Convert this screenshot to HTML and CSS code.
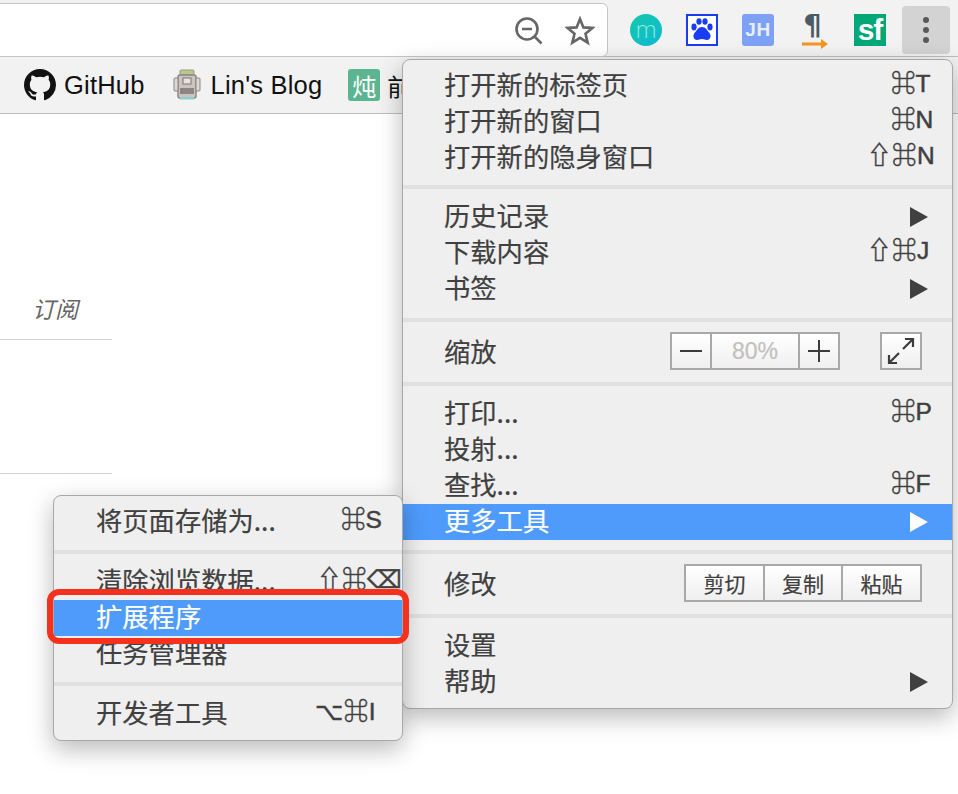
FILE: index.html
```html
<!DOCTYPE html>
<html lang="zh">
<head>
<meta charset="utf-8">
<title>Chrome menu</title>
<link rel="stylesheet" href="styles.css">
</head>
<body>
<div class="page">
  <header class="toolbar">
    <div class="omnibox">
      <svg class="omni-icon" width="30" height="30" viewBox="0 0 30 30" fill="none" stroke="#666" stroke-width="2.6"><circle cx="13" cy="13" r="10.5"/><path d="M8 13h10M20.500 20.500l7 7"/></svg>
      <svg class="omni-icon" width="30" height="30" viewBox="0 0 30 30" fill="none" stroke="#666" stroke-width="2.6" stroke-linejoin="miter"><path d="M15 3l3.400 8.400 9 .6-6.900 5.800 2.200 8.800L15 21.800l-7.700 4.800 2.200-8.800L2.600 12l9-.6z"/></svg>
    </div>
    <div class="extensions">
      <span class="ext ext-m">m</span>
      <svg class="ext" width="32" height="32" viewBox="0 0 32 32"><rect x="1" y="1" width="30" height="30" fill="#fff" stroke="#1a3cf5" stroke-width="2"/><g fill="#1a3cf5"><ellipse cx="8" cy="13" rx="2.600" ry="3.400"/><ellipse cx="13" cy="7.500" rx="2.600" ry="3.200"/><ellipse cx="19" cy="7.500" rx="2.600" ry="3.200"/><ellipse cx="24" cy="13" rx="2.600" ry="3.400"/><path d="M16 13c4 0 5 3.500 7.500 6 2 2.500 1 7-2.500 7-2 0-3-1-5-1s-3 1-5 1c-3.500 0-4.500-4.500-2.500-7C11 16.500 12 13 16 13z"/></g></svg>
      <span class="ext ext-jh">JH</span>
      <span class="ext ext-p"><span class="pilcrow">¶</span><svg class="arrow" width="26" height="10" viewBox="0 0 26 10"><path d="M0 5h20" stroke="#f7931e" stroke-width="3"/><path d="M19 0l7 5-7 5z" fill="#f7931e"/></svg></span>
      <span class="ext ext-sf">sf</span>
    </div>
    <button class="kebab" type="button" aria-label="menu"><i></i><i></i><i></i></button>
  </header>

  <nav class="bookmarks">
    <a class="bookmark">
      <svg width="32" height="32" viewBox="0 0 16 16" fill="#111"><path d="M8 0C3.580 0 0 3.580 0 8c0 3.540 2.290 6.530 5.470 7.590.4.070.55-.17.55-.38 0-.19-.01-.82-.01-1.490-2.010.37-2.530-.49-2.690-.94-.09-.23-.48-.94-.82-1.130-.28-.15-.68-.52-.01-.53.63-.01 1.080.58 1.230.82.72 1.210 1.870.87 2.330.66.07-.52.28-.87.51-1.070-1.780-.2-3.640-.89-3.640-3.950 0-.87.31-1.590.82-2.150-.08-.2-.36-1.020.08-2.120 0 0 .67-.21 2.200.82.64-.18 1.320-.27 2-.27s1.360.09 2 .27c1.530-1.040 2.200-.82 2.200-.82.44 1.100.16 1.920.08 2.120.51.56.82 1.270.82 2.150 0 3.070-1.870 3.750-3.650 3.950.29.25.54.73.54 1.480 0 1.070-.01 1.930-.01 2.200 0 .21.15.46.55.38A8.013 8.013 0 0016 8c0-4.420-3.580-8-8-8z"/></svg>
      <span>GitHub</span>
    </a>
    <a class="bookmark">
      <svg width="30" height="32" viewBox="0 0 30 32"><rect x="8" y="1" width="14" height="5" rx="1" fill="#b5c98a" stroke="#9a9a80"/><rect x="6" y="6" width="18" height="23" rx="2" fill="#c9c5c1" stroke="#8d8582" stroke-width="1.500"/><rect x="2" y="9" width="4" height="13" rx="1" fill="#dcd8d4" stroke="#8d8582"/><rect x="24" y="9" width="4" height="13" rx="1" fill="#dcd8d4" stroke="#8d8582"/><rect x="11" y="9" width="8" height="6" fill="#e6e2df" stroke="#7d7572"/><rect x="8" y="19" width="14" height="6" fill="#8d8582"/><rect x="8" y="28" width="14" height="2.500" fill="#8fd0cc"/></svg>
      <span>Lin's Blog</span>
    </a>
    <a class="bookmark">
      <span class="fav-dun">炖</span>
      <span class="cjk">前</span>
    </a>
  </nav>

  <main class="content">
    <div class="subscribe">订阅</div>
    <div class="gap-block"></div>
  </main>

  <section class="menu main-menu">
    <div class="row"><span>打开新的标签页</span><kbd>⌘T</kbd></div>
    <div class="row"><span>打开新的窗口</span><kbd>⌘N</kbd></div>
    <div class="row"><span>打开新的隐身窗口</span><kbd class="kbd-wide">⇧⌘N</kbd></div>
    <div class="sep"></div>
    <div class="row"><span>历史记录</span><i class="tri"></i></div>
    <div class="row"><span>下载内容</span><kbd class="kbd-wide">⇧⌘J</kbd></div>
    <div class="row"><span>书签</span><i class="tri"></i></div>
    <div class="sep sep-a"></div>
    <div class="row row-tool">
      <span>缩放</span>
      <div class="tools">
        <div class="btn-group zoom-group">
          <button class="btn" type="button"><svg width="24" height="24" viewBox="0 0 24 24"><path d="M1 12h22" stroke="#3c3c3c" stroke-width="2"/></svg></button>
          <button class="btn btn-dim" type="button">80%</button>
          <button class="btn" type="button"><svg width="24" height="24" viewBox="0 0 24 24"><path d="M1 12h22M12 1v22" stroke="#3c3c3c" stroke-width="2"/></svg></button>
        </div>
        <div class="btn-group full-group">
          <button class="btn" type="button"><svg width="28" height="28" viewBox="0 0 28 28" fill="none" stroke="#3c3c3c" stroke-width="2.200"><path d="M16 12L26 2M18 2h8v8M12 16L2 26M2 18v8h8"/></svg></button>
        </div>
      </div>
    </div>
    <div class="sep sep-b"></div>
    <div class="row"><span>打印...</span><kbd>⌘P</kbd></div>
    <div class="row"><span>投射...</span></div>
    <div class="row"><span>查找...</span><kbd>⌘F</kbd></div>
    <div class="row row-active"><span>更多工具</span><i class="tri"></i></div>
    <div class="sep sep-c"></div>
    <div class="row row-tool">
      <span>修改</span>
      <div class="btn-group edit-group">
        <button class="btn" type="button">剪切</button>
        <button class="btn" type="button">复制</button>
        <button class="btn" type="button">粘贴</button>
      </div>
    </div>
    <div class="sep sep-d"></div>
    <div class="row"><span>设置</span></div>
    <div class="row"><span>帮助</span><i class="tri"></i></div>
  </section>

  <section class="menu sub-menu">
    <div class="row"><span>将页面存储为...</span><kbd>⌘S</kbd></div>
    <div class="sep"></div>
    <div class="row"><span>清除浏览数据...</span><kbd class="kbd-wide">⇧⌘⌫</kbd></div>
    <div class="row row-active"><span>扩展程序</span></div>
    <div class="row"><span>任务管理器</span></div>
    <div class="sep"></div>
    <div class="row"><span>开发者工具</span><kbd class="kbd-wide kbd-alt">⌥⌘I</kbd></div>
  </section>

  <div class="callout"></div>
</div>
</body>
</html>
```
FILE: styles.css
```css
* { box-sizing: border-box; }
html, body { margin: 0; padding: 0; background: #fff; }
.page {
  position: relative;
  width: 958px;
  height: 794px;
  overflow: hidden;
  font-family: "Liberation Sans", "Noto Sans CJK SC", sans-serif;
  color: #111;
}

/* toolbar */
.toolbar {
  display: flex;
  align-items: flex-start;
  height: 57px;
  background: #f2f2f2;
  border-bottom: 1px solid #bdbdbd;
}
.omnibox {
  display: flex;
  flex: none;
  align-items: center;
  justify-content: flex-end;
  gap: 21px;
  width: 618px;
  height: 54px;
  margin: 3px 0 0 -10px;
  padding-right: 12px;
  padding-top: 1px;
  background: #fff;
  border: 1px solid #c6c6c6;
  border-radius: 6px;
}
.extensions {
  display: flex;
  gap: 24px;
  margin: 14px 0 0 22px;
}
.ext {
  display: flex;
  align-items: center;
  justify-content: center;
  width: 32px;
  height: 32px;
  flex: none;
}
.ext-m {
  border-radius: 50%;
  background: linear-gradient(135deg, #14c9a8, #0eb9d6);
  color: #8fe8e4;
  font: 300 24px "Open Sans", sans-serif;
  padding-bottom: 4px;
}
.ext-jh {
  border-radius: 3px;
  background: #7ea1f6;
  color: #e6efff;
  font: 700 19px "Liberation Sans", sans-serif;
  letter-spacing: .5px;
}
.ext-p {
  position: relative;
  display: block;
}
.pilcrow {
  display: block;
  padding-right: 3px;
  text-align: center;
  color: #4b5a63;
  font: 700 29px/26px "DejaVu Sans", sans-serif;
  margin-top: -2px;
}
.arrow { display: block; margin: 1px 0 0 4px; }
.ext-sf {
  background: #00a878;
  color: #fff;
  font: 700 30px/32px "Liberation Sans", sans-serif;
  letter-spacing: -1px;
}
.kebab {
  display: flex;
  flex: none;
  flex-direction: column;
  align-items: center;
  justify-content: center;
  gap: 4px;
  width: 48px;
  height: 48px;
  margin: 6px 0 0 16px;
  padding: 0;
  border: 0;
  border-radius: 4px;
  background: #d3d3d3;
}
.kebab i {
  width: 6px;
  height: 6px;
  border-radius: 50%;
  background: #595959;
}

/* bookmarks */
.bookmarks {
  display: flex;
  align-items: center;
  height: 57px;
  padding-left: 24px;
  background: #f2f2f2;
  border-bottom: 1px solid #bdbdbd;
}
.bookmark {
  display: flex;
  align-items: center;
  gap: 9px;
  margin-right: 26px;
  font-size: 25.500px;
  letter-spacing: .2px;
  color: #111;
}
.bookmark:first-child { gap: 8px; margin-right: 27px; }
.fav-dun {
  display: flex;
  align-items: center;
  justify-content: center;
  width: 32px;
  height: 32px;
  border-radius: 3px;
  background: #5bb590;
  color: #fff;
  font: 24px "Noto Sans CJK SC", sans-serif;
}
.cjk { font-family: "Noto Sans CJK SC", sans-serif; font-size: 24px; margin-left: -2px; }

/* page behind */
.content { width: 112px; }
.subscribe {
  height: 226px;
  padding: 179px 0 0 32px;
  border-bottom: 1px solid #d2d2d2;
  font: italic 23px/30px "Noto Sans CJK SC", sans-serif;
  color: #666;
}
.gap-block { height: 134px; border-bottom: 1px solid #d2d2d2; }

/* menus */
.menu {
  position: absolute;
  background: #efefef;
  border: 1px solid #a8a8a8;
  border-radius: 8px;
  box-shadow: 0 8px 24px rgba(0, 0, 0, .28);
  font-family: "Noto Sans CJK SC", sans-serif;
  font-size: 26.300px;
  color: #404040;
  -webkit-text-stroke: .2px currentColor;
}
.main-menu { left: 402px; top: 59px; width: 551px; height: 650px; padding-top: 8px; }
.sub-menu { left: 53px; top: 495px; width: 350px; height: 246px; padding-top: 8px; }
.row {
  display: flex;
  align-items: center;
  justify-content: space-between;
  height: 36px;
  padding: 0 18px 5px 41px;
  line-height: 36px;
  white-space: nowrap;
}
.sub-menu .row { padding-left: 42px; }
.row-active { background: #4e9bfc; color: #fff; }
.row-tool { height: auto; padding-bottom: 0; padding-right: 30px; }
kbd {
  flex: none;
  width: 43px;
  font-family: "Liberation Sans", "Noto Sans CJK JP", "DejaVu Sans", sans-serif;
  font-size: 24.500px;
  font-weight: 500;
  color: #404040;
  -webkit-text-stroke: .5px currentColor;
}
.kbd-wide { width: 67px; letter-spacing: .5px; }
.kbd-alt { width: 69px; }
.tri {
  width: 0;
  height: 0;
  border-style: solid;
  border-width: 10px 0 10px 18px;
  border-color: transparent transparent transparent currentColor;
  margin: 5px 6px 0 0;
}
.sep { height: 4px; margin: 9px 0 10px; background: #e0e0e0; }
.sub-menu .sep { margin: 10px 0; }
.sep-a { margin: 11px 0 10px; }
.sep-b { margin: 12px 0 10px; }
.sep-c { margin: 10px 0; }
.sep-d { margin: 12px 0 10px; }

/* button groups */
.tools { display: flex; gap: 40px; }
.btn-group {
  display: flex;
  height: 38px;
  border: 2px solid #a8a8a8;
}
.btn {
  display: flex;
  align-items: center;
  justify-content: center;
  height: 100%;
  padding: 0;
  border: 0;
  border-left: 2px solid #a8a8a8;
  background: linear-gradient(#fff, #efefef);
  font: 21px "Noto Sans CJK SC", sans-serif;
  color: #404040;
}
.btn:first-child { border-left: 0; }
.zoom-group .btn { width: 38px; }
.zoom-group .btn-dim {
  width: 88px;
  font: 23px "Liberation Sans", sans-serif;
  color: #c4c0bc;
}
.zoom-group .btn:last-child { width: 40px; }
.full-group .btn { width: 38px; }
.edit-group .btn { width: 78px; }
.edit-group .btn:first-child { width: 77px; }
.edit-group .btn:last-child { width: 79px; }

/* red highlight */
.callout {
  position: absolute;
  left: 47px;
  top: 589px;
  width: 362px;
  height: 55px;
  border: 6px solid #f5311d;
  border-radius: 12px;
}
```
